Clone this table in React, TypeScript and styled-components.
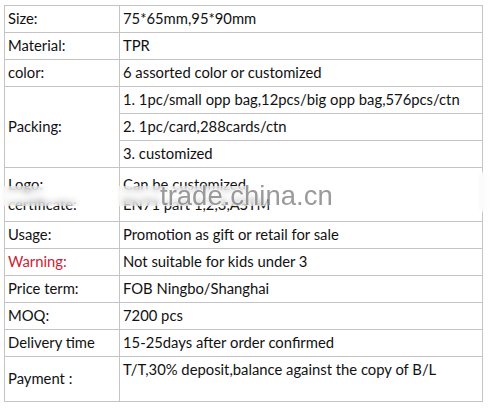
import styled, { createGlobalStyle } from "styled-components";

const GlobalStyle = createGlobalStyle`
  body {
    margin: 0;
    background: #ffffff;
    font-family: Lato, "Open Sans", sans-serif;
    color: #111111;
  }
`;

const Page = styled.div`
  position: relative;
  width: 492px;
  height: 410px;
  padding: 5px 0 0 4px;
  box-sizing: border-box;
  overflow: hidden;
`;

const Table = styled.table`
  border-collapse: collapse;
  width: 479px;
  table-layout: fixed;
  font-size: 14.8px;
`;

const Cell = styled.td<{ $top?: boolean; $warn?: boolean; $h?: number }>`
  border: 1px solid #c4c4c4;
  height: ${(p) => p.$h ?? 24}px;
  padding: ${(p) => (p.$top ? "2px 3px 0" : "0 3px 2px")};
  line-height: 20px;
  vertical-align: ${(p) => (p.$top ? "top" : "middle")};
  color: ${(p) => (p.$warn ? "#cc2233" : "#111111")};
  white-space: nowrap;
`;

const LabelCol = styled.col`
  width: 115px;
`;

const Line = styled.div`
  line-height: 20px;
`;

const Smudge = styled.div<{ $x: number; $y: number; $w: number; $h: number }>`
  position: absolute;
  left: ${(p) => p.$x}px;
  top: ${(p) => p.$y}px;
  width: ${(p) => p.$w}px;
  height: ${(p) => p.$h}px;
  backdrop-filter: blur(3px);
  background: rgba(255, 255, 255, 0.45);
`;

const Watermark = styled.div`
  position: absolute;
  left: 160px;
  top: 180px;
  font-family: "Liberation Sans", Arial, sans-serif;
  font-size: 27.5px;
  color: rgba(120, 120, 120, 0.75);
  text-shadow: 0 0 3px rgba(255, 255, 255, 0.9);
  white-space: nowrap;
`;

const rows: [string, string][] = [
  ["Size:", "75*65mm,95*90mm"],
  ["Material:", "TPR"],
  ["color:", "6 assorted color or customized"],
];

const rest: [string, string, boolean?][] = [
  ["Usage:", "Promotion as gift or retail for sale"],
  ["Warning:", "Not suitable for kids under 3", true],
  ["Price term:", "FOB Ningbo/Shanghai"],
  ["MOQ:", "7200 pcs"],
  ["Delivery time", "15-25days after order confirmed"],
];

export default function App() {
  return (
    <Page>
      <GlobalStyle />
      <Table>
        <colgroup>
          <LabelCol />
          <col />
        </colgroup>
        <tbody>
          {rows.map(([k, v]) => (
            <tr key={k}>
              <Cell>{k}</Cell>
              <Cell>{v}</Cell>
            </tr>
          ))}
          <tr>
            <Cell rowSpan={3}>Packing:</Cell>
            <Cell>1. 1pc/small opp bag,12pcs/big opp bag,576pcs/ctn</Cell>
          </tr>
          <tr>
            <Cell>2. 1pc/card,288cards/ctn</Cell>
          </tr>
          <tr>
            <Cell>3. customized</Cell>
          </tr>
          <tr>
            <Cell $h={51}>
              <Line>Logo:</Line>
              <Line>certificate:</Line>
            </Cell>
            <Cell $h={51}>
              <Line>Can be customized</Line>
              <Line>EN71 part 1,2,3,ASTM</Line>
            </Cell>
          </tr>
          {rest.map(([k, v, warn]) => (
            <tr key={k}>
              <Cell $warn={warn}>{k}</Cell>
              <Cell>{v}</Cell>
            </tr>
          ))}
          <tr>
            <Cell $h={42}>Payment :</Cell>
            <Cell $h={42} $top>
              T/T,30% deposit,balance against the copy of B/L
            </Cell>
          </tr>
        </tbody>
      </Table>
      <Smudge $x={0} $y={186} $w={80} $h={20} />
      <Smudge $x={117} $y={186} $w={150} $h={20} />
      <Smudge $x={478} $y={172} $w={12} $h={40} />
      <Watermark>trade.china.cn</Watermark>
    </Page>
  );
}
